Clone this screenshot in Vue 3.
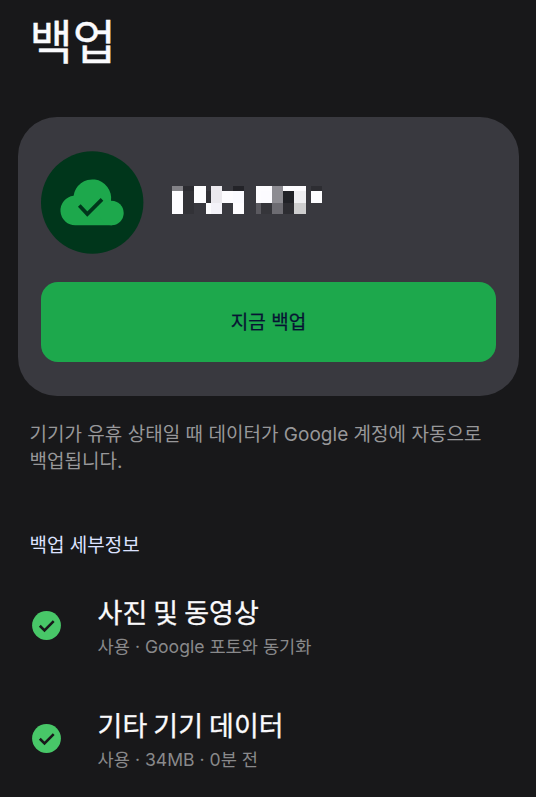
<script setup>
const mosaicColumns = [11, 11, 12, 5, 11, 11, 11, 12, 5, 11, 11, 11, 12, 5, 11]
const mosaicRows = [
  ['#838287', '#2c2c31', '#fdfdff', '', '#ebe9ee', '', '#232328', '', '#fdfcff', '#fdfcff', '#8d8c92', '#fdfcff', '#fdfcff', '', '#2d2d32'],
  ['#fdfcff', '#323237', '#fdfdff', '#323237', '#ebe9ee', '#fdfcff', '#fafaff', '', '#fdfcff', '#fcfbff', '#8d8c92', '#212227', '#efeff2', '', '#fdfdff'],
  ['#fdfcff', '#323237', '', '#fdfdff', '#f3f2f8', '', '#fdfcff', '', '#5b5a60', '#35353a', '#6d6c72', '#2d2d32', '#cececf', '', ''],
]
const mosaicCells = mosaicRows.flat()
const mosaicTemplate = mosaicColumns.map((w) => `${w}px`).join(' ')

const items = [
  { title: '사진 및 동영상', detail: '사용 · Google 포토와 동기화' },
  { title: '기타 기기 데이터', detail: '사용 · 34MB · 0분 전' },
]
</script>

<template>
  <main class="page">
    <h1 class="title">백업</h1>

    <section class="card">
      <div class="account">
        <svg class="cloud" viewBox="41 151 103 103" aria-hidden="true">
          <circle cx="92.2" cy="202.5" r="51.2" fill="#00361b" />
          <path
            fill="#1da84c"
            d="M75.7 225.2A14.8 14.8 0 0 1 73.6 195.7A18.8 18.8 0 0 1 111 200.9A12.2 12.2 0 0 1 111.5 225.2Z"
          />
          <circle cx="111.5" cy="213" r="12.2" fill="#1da84c" />
          <path d="M79.3 205.6L87.3 214.1L102 199.4" fill="none" stroke="#00361b" stroke-width="3.7" />
        </svg>
        <div class="mosaic" :style="{ gridTemplateColumns: mosaicTemplate }">
          <span v-for="(color, i) in mosaicCells" :key="i" :style="{ background: color || 'transparent' }" />
        </div>
      </div>
      <button class="action" type="button">지금 백업</button>
    </section>

    <p class="note">기기가 유휴 상태일 때 데이터가 Google 계정에 자동으로<br />백업됩니다.</p>

    <h2 class="heading">백업 세부정보</h2>

    <ul class="list">
      <li v-for="item in items" :key="item.title" class="item">
        <svg class="check" viewBox="-14.5 -14.5 29 29" aria-hidden="true">
          <circle r="14.4" fill="#48c768" />
          <path d="M-6.7 .3L-2 4.9L7.2 -4.3" fill="none" stroke="#18181a" stroke-width="2.6" />
        </svg>
        <div class="text">
          <div class="name">{{ item.title }}</div>
          <div class="detail">{{ item.detail }}</div>
        </div>
      </li>
    </ul>
  </main>
</template>

<style>
body {
  margin: 0;
  background: #18181a;
}
</style>

<style scoped>
.page {
  box-sizing: border-box;
  width: 536px;
  height: 797px;
  overflow: hidden;
  padding: 0 17px 0 18px;
  background: #18181a;
  color: #fafafc;
  font-family: Inter, 'Noto Sans CJK KR', sans-serif;
  white-space: nowrap;
}
.title {
  box-sizing: border-box;
  margin: 0;
  padding: 4px 0 0 11.5px;
  height: 117px;
  font: 400 47px/70px 'Noto Sans CJK KR', sans-serif;
  -webkit-text-stroke: 0.4px currentColor;
}
.card {
  box-sizing: border-box;
  height: 279px;
  padding: 34px 23px;
  border-radius: 39px;
  background: #39393f;
}
.account {
  display: flex;
  gap: 28px;
  height: 131px;
}
.cloud {
  width: 103px;
  height: 103px;
}
.mosaic {
  display: grid;
  grid-template-rows: 5px 12px 11px;
  height: 28px;
  margin-top: 35px;
}
.action {
  display: block;
  box-sizing: border-box;
  width: 455px;
  height: 80px;
  padding: 2px 0 0;
  border: 0;
  border-radius: 17px;
  background: #1da84c;
  color: #071333;
  font: 400 19px/78px Inter, 'Noto Sans CJK KR', sans-serif;
  -webkit-text-stroke: 0.25px currentColor;
}
.note {
  margin: 25px 0 0 11.5px;
  color: #979799;
  font-size: 19px;
  line-height: 27px;
  letter-spacing: 0.02px;
}
.heading {
  margin: 57px 0 0 11.5px;
  color: #dce2ff;
  font-size: 19px;
  line-height: 28px;
  font-weight: 400;
}
.list {
  margin: 32px 0 0;
  padding: 0 0 0 14px;
  list-style: none;
}
.item {
  display: flex;
  gap: 36.6px;
  height: 112.7px;
}
.check {
  width: 29px;
  height: 29px;
  margin-top: 19px;
}
.name {
  font: 400 27px/40px 'Noto Sans CJK KR', sans-serif;
  -webkit-text-stroke: 0.3px currentColor;
}
.detail {
  padding-top: 1px;
  color: #89898b;
  font-size: 17.6px;
  line-height: 28px;
}
</style>
